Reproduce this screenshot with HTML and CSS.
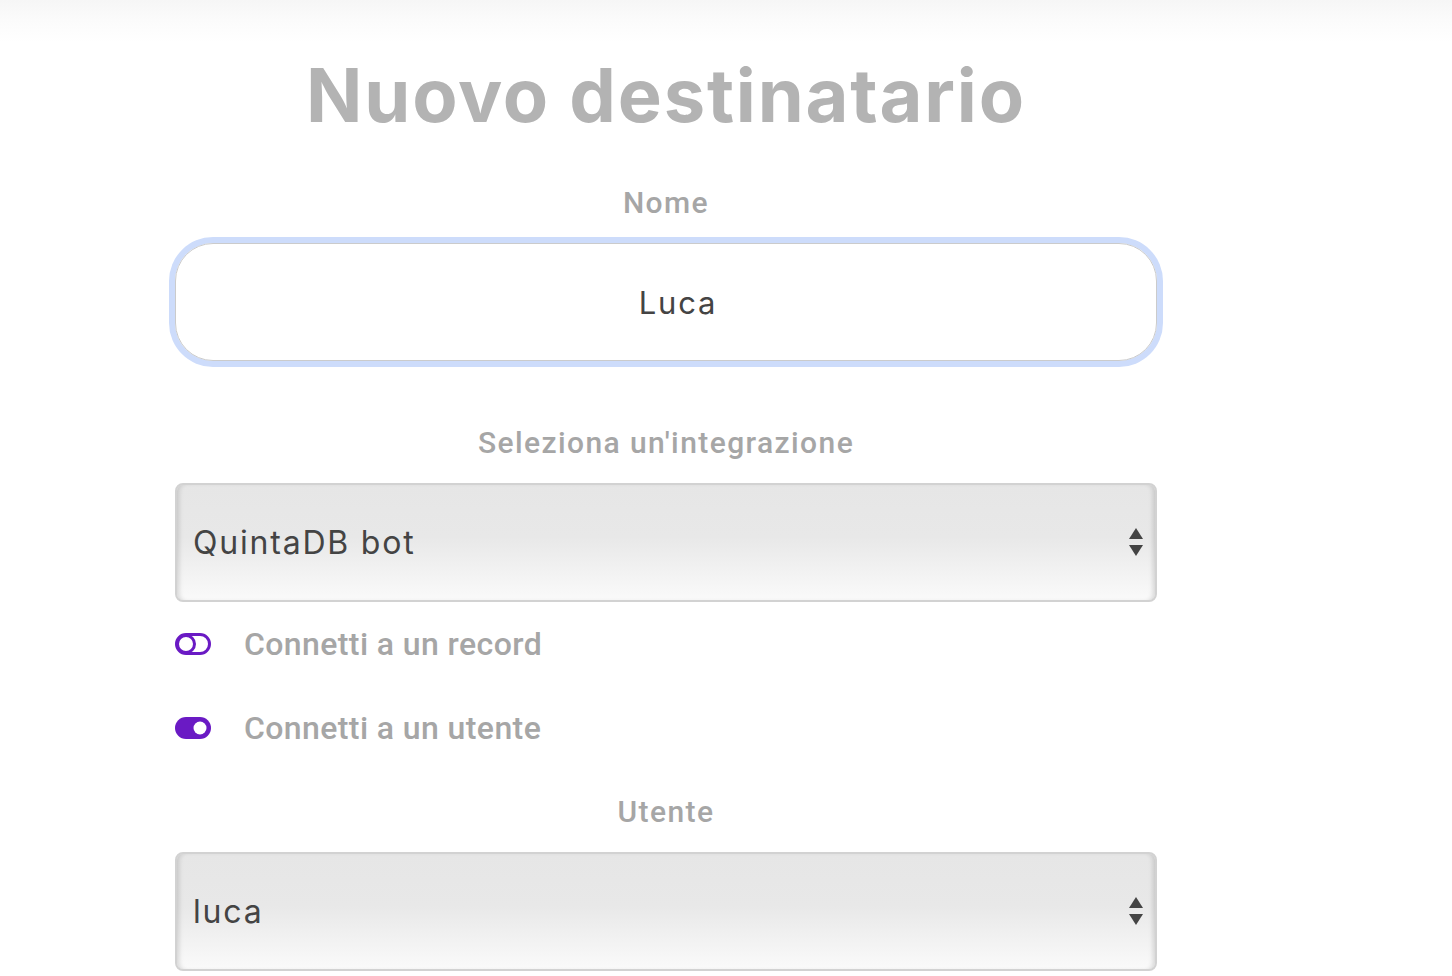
FILE: index.html
```html
<!DOCTYPE html>
<html lang="it">
<head>
<meta charset="utf-8">
<title>Nuovo destinatario</title>
<link rel="stylesheet" href="styles.css">
</head>
<body>
<form class="form">
  <h1 class="title">Nuovo destinatario</h1>

  <label class="label label-first">Nome</label>
  <div class="input">Luca</div>

  <label class="label label-section">Seleziona un'integrazione</label>
  <div class="select">
    <span class="select-value">QuintaDB bot</span>
    <svg class="arrows" width="14" height="30" viewBox="0 0 14 30"><path d="M7 0 L14 11 L0 11 Z" fill="#444"/><path d="M0 17 L14 17 L7 28 Z" fill="#444"/></svg>
  </div>

  <div class="toggle-row toggle-row-first">
    <svg class="toggle" width="36" height="22" viewBox="0 0 36 22"><rect x="1.5" y="1.5" width="33" height="19" rx="9.5" fill="#fff" stroke="#6a1ac4" stroke-width="3"/><circle cx="11" cy="11" r="8.5" fill="#fff" stroke="#6a1ac4" stroke-width="3"/></svg>
    <span class="toggle-text">Connetti a un record</span>
  </div>
  <div class="toggle-row toggle-row-second">
    <svg class="toggle" width="36" height="22" viewBox="0 0 36 22"><rect x="0" y="0" width="36" height="22" rx="11" fill="#6a1ac4"/><circle cx="25" cy="11" r="6.5" fill="#fff"/></svg>
    <span class="toggle-text">Connetti a un utente</span>
  </div>

  <label class="label label-user">Utente</label>
  <div class="select">
    <span class="select-value">luca</span>
    <svg class="arrows" width="14" height="30" viewBox="0 0 14 30"><path d="M7 0 L14 11 L0 11 Z" fill="#444"/><path d="M0 17 L14 17 L7 28 Z" fill="#444"/></svg>
  </div>
</form>
</body>
</html>
```
FILE: styles.css
```css
html, body {
  margin: 0;
  padding: 0;
}
body {
  height: 976px;
  overflow: hidden;
  background: #fff linear-gradient(to bottom, #f6f6f6 0px, #fbfbfb 20px, #ffffff 42px) no-repeat;
  background-size: 100% 42px;
}
.form {
  width: 982px;
  margin-left: 175px;
  display: flex;
  flex-direction: column;
}
.title {
  margin: 55px 0 0;
  height: 80px;
  line-height: 80px;
  text-align: center;
  font-family: "Inter", "Open Sans", sans-serif;
  font-weight: 700;
  font-size: 74px;
  letter-spacing: 1.8px;
  color: #b3b3b3;
}
.label {
  display: block;
  height: 36px;
  line-height: 36px;
  text-align: center;
  font-family: "Roboto", "Liberation Sans", sans-serif;
  font-weight: 500;
  font-size: 30px;
  letter-spacing: 1.4px;
  color: #a6a6a6;
}
.label-first { margin-top: 50px; }
.label-section { margin-top: 64px; }
.label-user { margin-top: 46px; }

.input {
  margin-top: 22px;
  height: 118px;
  box-sizing: border-box;
  border: 1.5px solid #cbcbcb;
  border-radius: 38px;
  box-shadow: 0 0 0 6px #cddcfb;
  display: flex;
  align-items: center;
  justify-content: center;
  font-family: "Inter", "Open Sans", sans-serif;
  font-size: 31px;
  letter-spacing: 1.8px;
  color: #444;
  padding-left: 24px;
}
.select {
  margin-top: 22px;
  height: 119px;
  box-sizing: border-box;
  border: 2px solid #d2d2d2;
  border-radius: 8px;
  background: linear-gradient(to bottom, #e6e6e6 0%, #e8e8e8 45%, #fafafa 100%);
  box-shadow: inset 5px 0 5px -3px rgba(0,0,0,0.14), inset -5px 0 5px -3px rgba(0,0,0,0.14);
  display: flex;
  align-items: center;
  justify-content: space-between;
  padding: 0 12px 0 16px;
}
.select-value {
  font-family: "Inter", "Open Sans", sans-serif;
  font-size: 32px;
  letter-spacing: 1.8px;
  color: #444;
}
.arrows {
  display: block;
}
.toggle-row {
  height: 40px;
  display: flex;
  align-items: center;
  gap: 33px;
}
.toggle-row-first { margin-top: 22px; }
.toggle-row-second { margin-top: 44px; }
.toggle {
  display: block;
  flex: none;
}
.toggle-text {
  font-family: "Roboto", "Liberation Sans", sans-serif;
  font-weight: 500;
  font-size: 32px;
  letter-spacing: 0.4px;
  color: #a6a6a6;
}
```
